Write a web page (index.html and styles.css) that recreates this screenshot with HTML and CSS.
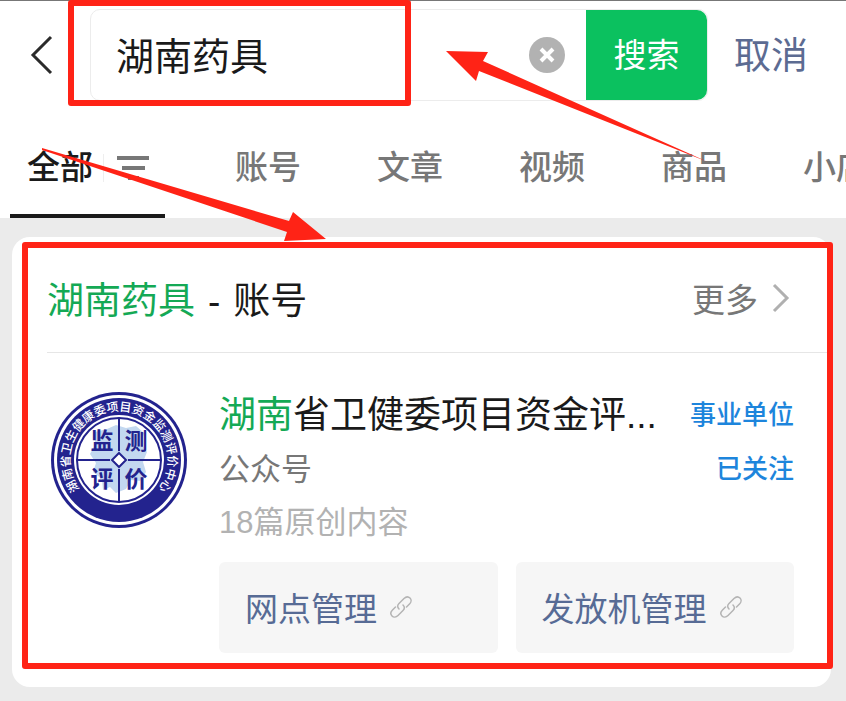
FILE: index.html
```html
<!DOCTYPE html>
<html lang="zh-CN">
<head>
    <meta charset="UTF-8">
    <meta name="viewport" content="width=device-width, initial-scale=1.0">
    <title>湖南药具</title>
    <link rel="stylesheet" href="styles.css">
</head>
<body>
    <header class="header">
        <!-- 搜索栏 -->
        <form class="search-bar">
            <button type="button" class="back" aria-label="返回">
                <svg width="24" height="42" viewBox="0 0 24 42"><path d="M22 3 4 21 22 39" fill="none" stroke="#2b2b2b" stroke-width="3"/></svg>
            </button>
            <div class="search-box">
                <input class="search-input" type="text" value="湖南药具" aria-label="搜索内容">
                <button type="button" class="clear" aria-label="清除">
                    <svg width="38" height="38" viewBox="0 0 38 38"><circle cx="19" cy="19" r="18" fill="#b2b2b2"/><path d="M13 13 25 25M25 13 13 25" stroke="#fff" stroke-width="4"/></svg>
                </button>
                <button type="button" class="search-btn">搜索</button>
                <span class="mark mark-search"></span>
            </div>
            <button type="button" class="cancel">取消</button>
        </form>

        <!-- 分类标签 -->
        <nav class="tabs">
            <a href="#" class="tab active">
                全部
                <svg class="filter" width="48" height="32" viewBox="0 0 48 32"><path d="M1.500 2V30" stroke="#eee" stroke-width="1"/><path d="M15 6H47M20 16H43M26 26H37" stroke="#777" stroke-width="4"/></svg>
            </a>
            <a href="#" class="tab">账号</a>
            <a href="#" class="tab">文章</a>
            <a href="#" class="tab">视频</a>
            <a href="#" class="tab">商品</a>
            <a href="#" class="tab">小店</a>
        </nav>
    </header>

    <main class="card">
        <div class="card-head">
            <h2 class="card-title"><em>湖南药具</em><span class="dash">-</span>账号</h2>
            <a href="#" class="more">更多
                <svg width="18" height="30" viewBox="0 0 18 30"><path d="M2 2 15 15 2 28" fill="none" stroke="#b0b0b0" stroke-width="3"/></svg>
            </a>
        </div>

        <div class="account">
            <!-- 圆形徽章 -->
            <svg class="logo" width="138" height="138" viewBox="-69 -69 138 138">
                <defs>
                    <path id="ring" d="M-35 34.300A49 49 0 1 1 35 34.300"/>
                </defs>
                <circle r="68" fill="#23238e"/>
                <circle r="65" fill="#fff"/>
                <circle r="62" fill="#23238e"/>
                <circle r="45" fill="#fff"/>
                <path fill="#c3d8f0" d="M-24-28-12-31-3-35 7-32 17-34 25-27 22-17 28-8 24 2 27 12 21 21 12 20 7 29-3 33-9 27-16 30-17 19-26 12-23 3-29-6-24-15Z"/>
                <circle r="42" fill="none" stroke="#23238e" stroke-width="2"/>
                <path d="M0-42V-9M0 9V42M-42 0H-9M9 0H42" stroke="#23238e" stroke-width="2"/>
                <path d="M0-7 7 0 0 7-7 0Z" fill="#fff" stroke="#23238e" stroke-width="2"/>
                <g class="logo-main">
                    <text x="-17" y="-11">监</text>
                    <text x="17" y="-11">测</text>
                    <text x="-17" y="27">评</text>
                    <text x="17" y="27">价</text>
                </g>
                <text class="logo-ring"><textPath href="#ring" startOffset="50%">湖南省卫生健康委项目资金监测评价中心</textPath></text>
            </svg>

            <div class="info">
                <div class="row">
                    <a href="#" class="name"><em>湖南</em>省卫健委项目资金评...</a>
                    <span class="status">事业单位</span>
                </div>
                <div class="row">
                    <span class="type">公众号</span>
                    <span class="status">已关注</span>
                </div>
                <div class="count">18篇原创内容</div>
                <div class="links">
                    <a href="#" class="link">网点管理
                        <svg width="24" height="24" viewBox="0 0 24 24"><g fill="none" stroke="#b4b4b4" stroke-width="1.500" stroke-linecap="round"><path d="M10 14C8 12 8.500 10 10 8.500L15 3.500C17 1.500 19.500 1.500 21 3S22.500 7 20.500 9L17.500 12"/><path d="M14 10C16 12 15.500 14 14 15.500L9 20.500C7 22.500 4.500 22.500 3 21S1.500 17 3.500 15L6.500 12"/></g></svg>
                    </a>
                    <a href="#" class="link">发放机管理
                        <svg width="24" height="24" viewBox="0 0 24 24"><g fill="none" stroke="#b4b4b4" stroke-width="1.500" stroke-linecap="round"><path d="M10 14C8 12 8.500 10 10 8.500L15 3.500C17 1.500 19.500 1.500 21 3S22.500 7 20.500 9L17.500 12"/><path d="M14 10C16 12 15.500 14 14 15.500L9 20.500C7 22.500 4.500 22.500 3 21S1.500 17 3.500 15L6.500 12"/></g></svg>
                    </a>
                </div>
            </div>
        </div>
        <span class="mark mark-card"></span>
    </main>

    <!-- 标注箭头 -->
    <svg class="arrows" width="846" height="260" viewBox="0 0 846 260">
        <path d="M446 51 488 52 483 61 708 162 479 71 476 81Z"/>
        <path d="M42 148 289 221 293 212 326 239 284 241 287 232 42 150Z"/>
    </svg>
</body>
</html>
```
FILE: styles.css
```css
* {
    box-sizing: border-box;
}
body {
    margin: 0;
    position: relative;
    min-height: 100vh;
    background: #ebebeb;
    font-family: "Liberation Sans", "Noto Sans CJK SC", sans-serif;
    color: #1a1a1a;
    overflow-x: hidden;
}
a {
    color: inherit;
    text-decoration: none;
}
em {
    font-style: normal;
    color: #14a955;
}
button {
    flex: none;
    padding: 0;
    border: none;
    background: none;
    font-family: inherit;
    white-space: nowrap;
    cursor: pointer;
}
svg {
    display: block;
    flex: none;
}

/* 顶部 */
.header {
    background: #fff;
    border-top: 1px solid #777;
}
.search-bar {
    display: flex;
    align-items: center;
    padding: 8px 38px 0 29px;
}
.back {
    margin-right: 37px;
}
.search-box {
    position: relative;
    flex: 1;
    display: flex;
    align-items: center;
    min-width: 0;
    height: 92px;
    border: 1px solid #ececec;
    border-radius: 10px;
}
.search-input {
    flex: 1;
    min-width: 0;
    height: 80px;
    padding: 0 0 4px 25px;
    border: none;
    outline: none;
    background: none;
    font-family: inherit;
    font-size: 38px;
    color: #1a1a1a;
}
.clear {
    margin-right: 20px;
}
.search-btn {
    width: 121px;
    height: 90px;
    padding-bottom: 4px;
    border-radius: 0 10px 10px 0;
    background: #0bc15f;
    color: #fff;
    font-size: 33px;
}
.cancel {
    margin-left: 26px;
    padding-bottom: 4px;
    color: #5c6b92;
    font-size: 37px;
}

/* 标签 */
.tabs {
    display: flex;
    gap: 76px;
    padding: 33px 0 0 10px;
    overflow: hidden;
    white-space: nowrap;
}
.tab {
    flex: none;
    height: 84px;
    line-height: 68px;
    font-size: 33px;
    font-weight: 500;
    color: #777;
}
.tab.active {
    display: flex;
    align-items: center;
    width: 155px;
    margin-right: -6px;
    padding: 0 0 12px 17px;
    border-bottom: 4px solid #1a1a1a;
    color: #1a1a1a;
}
.filter {
    margin-left: 9px;
}

/* 结果卡片 */
.card {
    position: relative;
    margin: 19px 15px 0 12px;
    padding-bottom: 34px;
    border-radius: 18px;
    background: #fff;
}
.card-head {
    display: flex;
    justify-content: space-between;
    align-items: center;
    height: 116px;
    margin-left: 35px;
    padding: 6px 41px 0 0;
    border-bottom: 1px solid #e6e6e6;
}
.card-title {
    margin: 0;
    font-size: 37px;
    font-weight: 400;
}
.dash {
    margin: 0 13px;
}
.more {
    display: flex;
    align-items: center;
    gap: 14px;
    font-size: 33px;
    color: #777;
}
.account {
    display: flex;
    gap: 31px;
    padding: 32px 37px 0 38px;
}
.info {
    flex: 1;
    min-width: 0;
}
.row {
    display: flex;
    justify-content: space-between;
    align-items: center;
    height: 54px;
}
.name {
    font-size: 37px;
    white-space: nowrap;
}
.status {
    font-size: 26px;
    font-weight: 500;
    color: #1d85dc;
    white-space: nowrap;
}
.type {
    font-size: 31px;
    color: #777;
}
.count {
    line-height: 60px;
    font-size: 31px;
    color: #b2b2b2;
}
.links {
    display: flex;
    gap: 18px;
    margin-top: 9px;
}
.link {
    flex: 1;
    display: flex;
    align-items: center;
    gap: 12px;
    height: 91px;
    padding: 0 0 2px 26px;
    border-radius: 6px;
    background: #f6f6f6;
    font-size: 33px;
    color: #576b95;
    white-space: nowrap;
}
.logo {
    margin-top: 6px;
}
.logo-main {
    fill: #23238e;
    font-size: 23px;
    font-weight: 700;
    text-anchor: middle;
}
.logo-ring {
    fill: #fff;
    font-size: 12px;
    font-weight: 500;
    text-anchor: middle;
}

/* 红色标注 */
.mark {
    position: absolute;
    border: 6px solid #ff2316;
    border-radius: 3px;
    pointer-events: none;
}
.mark-search {
    top: -10px;
    left: -23px;
    width: 343px;
    height: 106px;
}
.mark-card {
    top: 5px;
    right: -2px;
    bottom: 18px;
    left: 10px;
}
.arrows {
    position: absolute;
    top: 0;
    left: 0;
    fill: #ff2316;
    pointer-events: none;
}
```
